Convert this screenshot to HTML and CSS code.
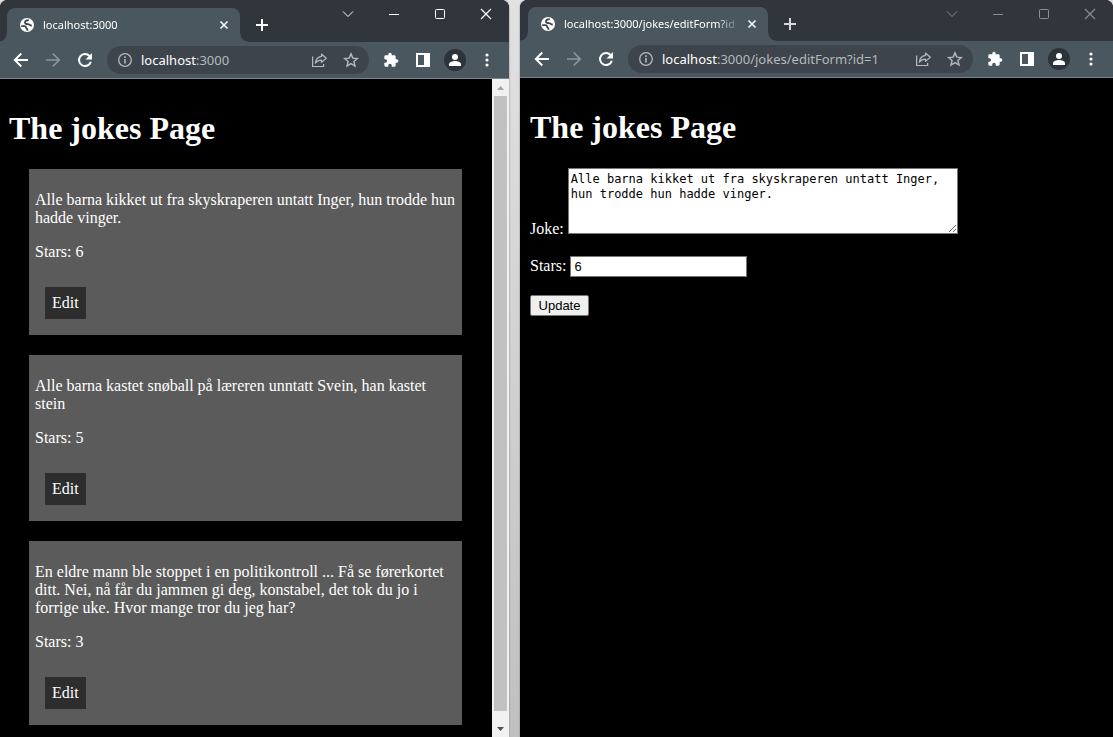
FILE: index.html
```html
<!DOCTYPE html>
<html lang="en">
<head>
<meta charset="utf-8">
<title>The jokes Page</title>
<link rel="stylesheet" href="styles.css">
</head>
<body>
<svg class="sprite" aria-hidden="true">
  <symbol id="globe" viewBox="0 0 16 16"><circle cx="8" cy="8" r="7" fill="#fff"/><path d="M9.800 3.200C7.500 3.200 6 4 6 5.400c0 1.500 1.500 1.700 3 1.800 1.500.1 1.700 1.400 3.800 1.300M2.200 9.200h3.300c1.200 0 1.500.6 1.500 1.400 0 .9 1.400.8 1.400 1.900v1.300" fill="none" stroke="#3d474f" stroke-width="1.800"/></symbol>
  <symbol id="x" viewBox="0 0 16 16"><path d="M4.500 4.500l7 7M11.500 4.500l-7 7" stroke="currentColor" stroke-width="1.500" fill="none"/></symbol>
  <symbol id="plus" viewBox="0 0 16 16"><path d="M8 2v12M2 8h12" stroke="currentColor" stroke-width="2" fill="none"/></symbol>
  <symbol id="back" viewBox="0 0 16 16"><path d="M15 8H2M8.300 1.500L1.800 8l6.500 6.500" stroke="currentColor" stroke-width="1.900" fill="none"/></symbol>
  <symbol id="forward" viewBox="0 0 16 16"><path d="M1 8h13M7.700 1.500L14.200 8l-6.500 6.500" stroke="currentColor" stroke-width="1.700" fill="none"/></symbol>
  <symbol id="reload" viewBox="0 0 16 16"><path d="M13.800 9.700A6 6 0 1 1 12.500 4" stroke="currentColor" stroke-width="2" fill="none"/><path d="M15 1v6.500H8.500z" fill="currentColor"/></symbol>
  <symbol id="info" viewBox="0 0 16 16"><circle cx="8" cy="8" r="6.300" fill="none" stroke="currentColor" stroke-width="1.300"/><path d="M8 7v4.500M8 4.300v1.600" stroke="currentColor" stroke-width="1.600"/></symbol>
  <symbol id="share" viewBox="0 0 16 16"><path d="M1.600 4.500v10h11v-2.500" fill="none" stroke="currentColor" stroke-width="1.200"/><path d="M10.500 2l4.800 4.200-4.800 4.200V8.200c-2.800 0-4.700.9-6.200 3C4.700 7.600 6.700 4.900 10.500 4.400z" fill="none" stroke="currentColor" stroke-width="1.200" stroke-linejoin="round"/></symbol>
  <symbol id="star" viewBox="0 0 16 16"><path d="M8 1.900l1.800 4.200 4.600.4-3.500 3 1.100 4.500L8 11.600 4 14l1.100-4.500-3.500-3 4.600-.4z" fill="none" stroke="currentColor" stroke-width="1.400"/></symbol>
  <symbol id="puzzle" viewBox="0 0 24 24"><path fill="currentColor" d="M20.500 11H19V7c0-1.100-.9-2-2-2h-4V3.500a2.500 2.500 0 0 0-5 0V5H4c-1.100 0-2 .9-2 2v3.800h1.500a2.700 2.700 0 0 1 0 5.400H2V20c0 1.100.9 2 2 2h3.800v-1.500a2.700 2.700 0 0 1 5.400 0V22H17c1.100 0 2-.9 2-2v-4h1.500a2.500 2.500 0 0 0 0-5z"/></symbol>
  <symbol id="panel" viewBox="0 0 16 16"><path fill="currentColor" fill-rule="evenodd" d="M1 1h14v14H1zM3 3v10h6V3z"/></symbol>
  <symbol id="person" viewBox="0 0 22 22"><circle cx="11" cy="11" r="11" fill="#2d333a"/><circle cx="11" cy="8" r="3" fill="#fff"/><path d="M5 17v-1.800c0-2.100 3.600-3.200 6-3.200s6 1.100 6 3.200V17z" fill="#fff"/></symbol>
  <symbol id="dots" viewBox="0 0 16 16"><g fill="currentColor"><circle cx="8" cy="3" r="1.600"/><circle cx="8" cy="8" r="1.600"/><circle cx="8" cy="13" r="1.600"/></g></symbol>
  <symbol id="chevron" viewBox="0 0 12 12"><path d="M1 3.500l5 5 5-5" fill="none" stroke="currentColor"/></symbol>
  <symbol id="minimize" viewBox="0 0 12 12"><path d="M1 6.500h10" stroke="currentColor"/></symbol>
  <symbol id="maximize" viewBox="0 0 12 12"><rect x="1.500" y="1.500" width="9" height="9" rx="1" fill="none" stroke="currentColor"/></symbol>
  <symbol id="close" viewBox="0 0 12 12"><path d="M1 1l10 10M11 1L1 11" stroke="currentColor" stroke-width="1.200"/></symbol>
</svg>

<div class="desktop">
  <section class="window window-list">
    <header class="tab-strip">
      <div class="tab">
        <svg class="icon"><use href="#globe"/></svg>
        <span class="tab-title">localhost:3000</span>
        <button class="tab-close" aria-label="Close tab"><svg class="icon"><use href="#x"/></svg></button>
      </div>
      <button class="new-tab" aria-label="New tab"><svg class="icon"><use href="#plus"/></svg></button>
      <div class="controls">
        <button aria-label="Search tabs"><svg><use href="#chevron"/></svg></button>
        <button aria-label="Minimize"><svg><use href="#minimize"/></svg></button>
        <button aria-label="Maximize"><svg><use href="#maximize"/></svg></button>
        <button aria-label="Close"><svg><use href="#close"/></svg></button>
      </div>
    </header>
    <nav class="toolbar">
      <button class="tool" aria-label="Back"><svg class="icon"><use href="#back"/></svg></button>
      <button class="tool muted" aria-label="Forward"><svg class="icon"><use href="#forward"/></svg></button>
      <button class="tool" aria-label="Reload"><svg class="icon"><use href="#reload"/></svg></button>
      <div class="omnibox">
        <svg class="icon"><use href="#info"/></svg>
        <div class="url" role="textbox" aria-label="Address" contenteditable="true" spellcheck="false"><span class="host">localhost</span>:3000</div>
        <button class="tool" aria-label="Share"><svg class="icon"><use href="#share"/></svg></button>
        <button class="tool" aria-label="Bookmark"><svg class="icon"><use href="#star"/></svg></button>
      </div>
      <button class="tool" aria-label="Extensions"><svg class="icon"><use href="#puzzle"/></svg></button>
      <button class="tool" aria-label="Side panel"><svg class="icon"><use href="#panel"/></svg></button>
      <button class="tool" aria-label="Profile"><svg class="avatar"><use href="#person"/></svg></button>
      <button class="tool" aria-label="Menu"><svg class="icon"><use href="#dots"/></svg></button>
    </nav>
    <div class="viewport">
      <main class="page">
        <h1>The jokes Page</h1>
        <article class="joke">
          <p>Alle barna kikket ut fra skyskraperen untatt Inger, hun trodde hun hadde vinger.</p>
          <p>Stars: 6</p>
          <a class="edit" href="#edit1">Edit</a>
        </article>
        <article class="joke">
          <p>Alle barna kastet snøball på læreren unntatt Svein, han kastet stein</p>
          <p>Stars: 5</p>
          <a class="edit" href="#edit2">Edit</a>
        </article>
        <article class="joke">
          <p>En eldre mann ble stoppet i en politikontroll ... Få se førerkortet ditt. Nei, nå får du jammen gi deg, konstabel, det tok du jo i forrige uke. Hvor mange tror du jeg har?</p>
          <p>Stars: 3</p>
          <a class="edit" href="#edit3">Edit</a>
        </article>
      </main>
      <div class="scrollbar" aria-hidden="true">
        <svg class="arrow arrow-up" viewBox="0 0 17 17"><path d="M5 11h7L8.500 7z"/></svg>
        <div class="thumb"></div>
        <svg class="arrow arrow-down" viewBox="0 0 17 17"><path d="M5 7h7L8.500 11z"/></svg>
      </div>
    </div>
  </section>

  <section class="window window-form">
    <header class="tab-strip">
      <div class="tab">
        <svg class="icon"><use href="#globe"/></svg>
        <span class="tab-title">localhost:3000/jokes/editForm?id</span>
        <button class="tab-close" aria-label="Close tab"><svg class="icon"><use href="#x"/></svg></button>
      </div>
      <button class="new-tab" aria-label="New tab"><svg class="icon"><use href="#plus"/></svg></button>
      <div class="controls">
        <button aria-label="Search tabs"><svg><use href="#chevron"/></svg></button>
        <button aria-label="Minimize"><svg><use href="#minimize"/></svg></button>
        <button aria-label="Maximize"><svg><use href="#maximize"/></svg></button>
        <button aria-label="Close"><svg><use href="#close"/></svg></button>
      </div>
    </header>
    <nav class="toolbar">
      <button class="tool" aria-label="Back"><svg class="icon"><use href="#back"/></svg></button>
      <button class="tool muted" aria-label="Forward"><svg class="icon"><use href="#forward"/></svg></button>
      <button class="tool" aria-label="Reload"><svg class="icon"><use href="#reload"/></svg></button>
      <div class="omnibox">
        <svg class="icon"><use href="#info"/></svg>
        <div class="url" role="textbox" aria-label="Address" contenteditable="true" spellcheck="false"><span class="host">localhost</span>:3000/jokes/editForm?id=1</div>
        <button class="tool" aria-label="Share"><svg class="icon"><use href="#share"/></svg></button>
        <button class="tool" aria-label="Bookmark"><svg class="icon"><use href="#star"/></svg></button>
      </div>
      <button class="tool" aria-label="Extensions"><svg class="icon"><use href="#puzzle"/></svg></button>
      <button class="tool" aria-label="Side panel"><svg class="icon"><use href="#panel"/></svg></button>
      <button class="tool" aria-label="Profile"><svg class="avatar"><use href="#person"/></svg></button>
      <button class="tool" aria-label="Menu"><svg class="icon"><use href="#dots"/></svg></button>
    </nav>
    <div class="viewport">
      <main class="page">
        <h1>The jokes Page</h1>
        <form class="joke-form">
          <div class="field">
            <label for="joke">Joke:</label>
            <textarea id="joke" rows="4" spellcheck="false">Alle barna kikket ut fra skyskraperen untatt Inger, hun trodde hun hadde vinger.</textarea>
          </div>
          <div class="field">
            <label for="stars">Stars:</label>
            <input id="stars" type="text" value="6">
          </div>
          <button class="update" type="button">Update</button>
        </form>
      </main>
    </div>
  </section>
</div>
</body>
</html>
```
FILE: styles.css
```css
* { box-sizing: border-box; }

body {
  margin: 0;
  overflow: hidden;
  background: linear-gradient(#e2e2e2, #c0c0c0);
}

button {
  display: flex;
  align-items: center;
  justify-content: center;
  padding: 0;
  border: 0;
  background: none;
  color: inherit;
}

svg { display: block; flex: none; }
.sprite { position: absolute; width: 0; height: 0; }
.icon { width: 16px; height: 16px; }
.avatar { width: 22px; height: 22px; }

.desktop {
  display: grid;
  grid-template-columns: 509fr 593fr;
  column-gap: 11px;
  height: 100vh;
}

.window {
  display: flex;
  flex-direction: column;
  min-width: 0;
  min-height: 0;
  overflow: hidden;
  border-radius: 8px 8px 0 0;
  background: #000;
  color: #fff;
  box-shadow: 0 0 2px #777;
}

/* Tab strip */
.tab-strip {
  display: flex;
  align-items: flex-end;
  flex: none;
  height: 42px;
  padding-left: 7px;
  background: #30363c;
}
.window-form .tab-strip { height: 41px; padding-left: 8px; }

.tab {
  position: relative;
  display: flex;
  align-items: center;
  width: 233px;
  height: 34px;
  padding: 0 8px 0 12px;
  border-radius: 8px 8px 0 0;
  background: #4a575f;
}
.window-form .tab { width: 240px; }

.tab::before,
.tab::after {
  content: "";
  position: absolute;
  bottom: 0;
  width: 8px;
  height: 8px;
}
.tab::before { right: 100%; background: radial-gradient(circle at 0 0, #30363c 7px, #4a575f 8px); }
.tab::after { left: 100%; background: radial-gradient(circle at 100% 0, #30363c 7px, #4a575f 8px); }

.tab-title {
  flex: 1;
  min-width: 0;
  margin: 0 4px 0 8px;
  overflow: hidden;
  white-space: nowrap;
  font: 11px/16px "Noto Sans", "Open Sans", sans-serif;
  -webkit-mask-image: linear-gradient(to left, transparent, #000 24px);
  mask-image: linear-gradient(to left, transparent, #000 24px);
}

.new-tab { width: 28px; height: 34px; margin-left: 8px; }

.controls {
  display: flex;
  align-self: flex-start;
  margin-left: auto;
}
.controls button { width: 46px; height: 28px; }
.controls svg { width: 12px; height: 12px; }
.window-form .controls { color: #8b8f92; }
.window-form .new-tab { color: #d5d8da; }

/* Toolbar */
.toolbar {
  display: flex;
  align-items: center;
  flex: none;
  height: 37px;
  padding: 0 6px 0 5px;
  border-bottom: 1px solid #7a868c;
  background: #4a575f;
}
.window-form .toolbar { padding-left: 6px; }

.tool { width: 32px; height: 28px; flex: none; }
.muted { color: #8d969b; }

.omnibox {
  display: flex;
  align-items: center;
  flex: 1;
  min-width: 0;
  height: 28px;
  margin: 0 6px;
  padding: 0 2px 0 10px;
  border-radius: 14px;
  background: #3d444b;
  color: #b4babd;
}

.url {
  flex: 1;
  min-width: 0;
  margin-left: 8px;
  overflow: hidden;
  white-space: nowrap;
  font: 13px/20px "Noto Sans", "Open Sans", sans-serif;
}
.host { color: #fff; }

/* Page */
.viewport {
  display: flex;
  flex: 1;
  min-height: 0;
}

.page {
  flex: 1;
  min-width: 0;
  padding: 10px 10px 0 9px;
  overflow: hidden;
  font: 16px/18px "Liberation Serif", "Times New Roman", serif;
}
.window-form .page { padding-left: 10px; }

h1 {
  margin: 21px 0 22px;
  font-size: 32px;
  line-height: 37px;
}

.joke {
  display: flow-root;
  margin: 0 20px 20px;
  padding: 6px;
  background: #5b5b5b;
}
.joke p { margin: 16px 0; }

.edit {
  display: block;
  width: fit-content;
  margin: 26px 10px 10px;
  padding: 7px;
  background: #2d2d2d;
  color: #fff;
  text-decoration: none;
}

.scrollbar {
  display: flex;
  flex-direction: column;
  width: 17px;
  background: #f1f1f1;
}
.arrow { width: 17px; height: 17px; }
.arrow-up { fill: #a3a3a3; }
.arrow-down { margin-top: 9px; fill: #505050; }
.thumb { flex: 1; margin: 0 2px; background: #c1c1c1; }

/* Form */
.joke-form {
  display: flex;
  flex-direction: column;
  align-items: flex-start;
  gap: 18px;
}

textarea {
  width: 390px;
  padding: 3px 2px 1px;
  border: 1px solid #767676;
  font: 12px/15px "DejaVu Sans Mono", monospace;
  vertical-align: baseline;
}

input {
  width: 177px;
  height: 21px;
  padding: 1px 3px;
  border: 1px solid #767676;
  font: 13px/15px "Liberation Sans", Arial, sans-serif;
}

.update {
  min-width: 59px;
  height: 21px;
  padding: 0 7px;
  border: 1px solid #767676;
  border-radius: 2px;
  background: #efefef;
  color: #000;
  font: 13px/15px "Liberation Sans", Arial, sans-serif;
}
```
